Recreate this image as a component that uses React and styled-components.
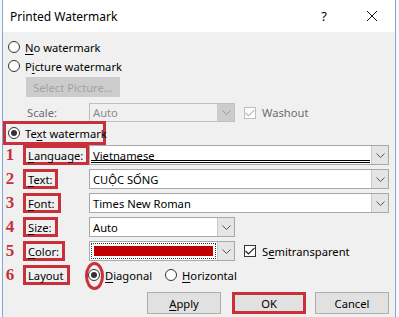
import React from 'react'
import styled, { createGlobalStyle } from 'styled-components'

const Global = createGlobalStyle`
  html, body { margin: 0; padding: 0; background: #fff; }
  body {
    font-family: "Segoe UI", "Noto Sans", "Open Sans", sans-serif;
    font-size: 11.2px;
    color: #000;
    white-space: nowrap;
  }
`

const RED = '#c8303a'

const Window = styled.div`
  width: 399px;
  height: 317px;
  display: flex;
  background: #f4f7fb;
  overflow: hidden;
`
const Dialog = styled.div`
  margin-left: 2px;
  width: 392px;
  height: 317px;
  border-left: 1px solid #86a6d3;
  border-right: 1px solid #86a6d3;
  background: #f0f0f0;
  display: flex;
  flex-direction: column;
`
const TitleBar = styled.div`
  height: 32px;
  background: #fff;
  display: flex;
  align-items: center;
  padding-left: 7px;
  font-size: 12px;
`
const Title = styled.span`
  flex: 1;
`
const Help = styled.span`
  width: 12px;
  margin-right: 36px;
  text-align: center;
  font-size: 13px;
`
const Close = styled.div`
  width: 12px;
  height: 12px;
  margin-right: 17px;
  display: flex;
`
const Body = styled.div`
  display: flex;
  flex-direction: column;
`
const Row = styled.div`
  display: flex;
  align-items: center;
  height: ${p => p.$h || 19}px;
  margin-top: ${p => p.$mt || 0}px;
  padding-left: ${p => p.$pl || 0}px;
`
const Radio = styled.span`
  width: 12px;
  height: 12px;
  border: 1px solid #333;
  border-radius: 50%;
  background: #fff;
  box-sizing: border-box;
  display: inline-flex;
  align-items: center;
  justify-content: center;
  margin-right: 5px;
  flex: none;
  position: relative;
  &::before {
    content: '';
    display: ${p => (p.$on ? 'block' : 'none')};
    width: 6px;
    height: 6px;
    border-radius: 50%;
    background: #333;
  }
  &::after {
    content: '';
    display: ${p => (p.$ring ? 'block' : 'none')};
    position: absolute;
    left: -4px;
    top: -8px;
    width: 19px;
    height: 28px;
    box-sizing: border-box;
    border: 3px solid ${RED};
    border-radius: 50%;
  }
`
const U = styled.span`
  text-decoration: underline;
  text-underline-offset: 2px;
`
const Disabled = styled.span`
  color: ${p => p.$c || '#6d6d6d'};
`
const FlatButton = styled.div`
  width: 94px;
  height: 20px;
  margin-left: 23px;
  margin-top: 2px;
  background: #cccccc;
  color: #a2a2a2;
  display: flex;
  align-items: center;
  justify-content: center;
`
const PlainLabel = styled.span`
  width: 62px;
  padding-left: 24px;
  color: ${p => p.$c || '#000'};
`
const Combo = styled.div`
  width: ${p => p.$w}px;
  height: ${p => p.$h || 20}px;
  box-sizing: border-box;
  border: 1px solid ${p => (p.$off ? '#bfbfbf' : '#a8a8a8')};
  background: ${p => (p.$off ? '#f0f0f0' : '#fff')};
  display: flex;
  flex: none;
`
const Value = styled.div`
  flex: 1;
  display: flex;
  align-items: center;
  padding-left: 3px;
  color: ${p => (p.$off ? '#8a8a8a' : '#000')};
  position: relative;
  ${p =>
    p.$double &&
    `&::after {
      content: '';
      position: absolute;
      left: 1px; right: 1px; bottom: 1px;
      height: 1px;
      border-top: 1px solid #000;
      border-bottom: 1px solid #000;
    }`}
`
const Swatch = styled.div`
  flex: 1;
  margin: 1px;
  border: 1px dotted #333;
  padding: 2px;
  display: flex;
  &::before {
    content: '';
    flex: 1;
    background: #c00000;
  }
`
const Arrow = styled.div`
  width: 16px;
  background: ${p => (p.$off ? '#cccccc' : '#e5e5e5')};
  border-left: 1px solid ${p => (p.$off ? '#cccccc' : '#c8c8c8')};
  display: flex;
  align-items: center;
  justify-content: center;
`
const Check = styled.span`
  width: 12px;
  height: 12px;
  box-sizing: border-box;
  border: 1px solid ${p => (p.$off ? '#bcbcbc' : '#333')};
  background: #fff;
  margin-left: 9px;
  margin-right: 6px;
  display: inline-flex;
  align-items: center;
  justify-content: center;
`
const RedBox = styled.div`
  width: 103px;
  height: 24px;
  box-sizing: border-box;
  border: 3px solid ${RED};
  display: flex;
  align-items: center;
  padding-left: 2px;
  margin-top: -1px;
`
const Num = styled.span`
  width: 14px;
  text-align: center;
  font-family: "Liberation Serif", "Times New Roman", serif;
  font-weight: bold;
  font-size: 17px;
  color: ${RED};
`
const LabelCell = styled.div`
  width: 72px;
  padding-left: 6px;
  box-sizing: border-box;
  display: flex;
`
const LabelBox = styled.span`
  height: 20px;
  box-sizing: border-box;
  border: 3px solid ${RED};
  padding: 0 3px 0 2px;
  display: inline-flex;
  align-items: center;
`
const Options = styled.div`
  display: flex;
  align-items: center;
  margin-left: -1px;
`
const Option = styled.span`
  display: inline-flex;
  align-items: center;
  margin-right: ${p => p.$mr || 0}px;
`
const ButtonRow = styled.div`
  display: flex;
  margin-top: 7px;
  padding-left: 144px;
`
const Button = styled.div`
  width: 74px;
  height: 22px;
  box-sizing: border-box;
  background: #e1e1e1;
  border: ${p => (p.$red ? `3px solid ${RED}` : '1px solid #adadad')};
  margin-right: ${p => p.$mr || 0}px;
  display: flex;
  align-items: center;
  justify-content: center;
`

const Chevron = ({ off }) => (
  <svg width="9" height="5" viewBox="0 0 9 5">
    <path d="M0.5 0.5 L4.5 4.5 L8.5 0.5" fill="none" stroke={off ? '#9a9a9a' : '#555'} strokeWidth="1" />
  </svg>
)

const Tick = ({ off }) => (
  <svg width="10" height="8" viewBox="0 0 10 8">
    <path d="M0.5 4 L3.5 7 L9.5 0.8" fill="none" stroke={off ? '#bcbcbc' : '#222'} strokeWidth="1.2" />
  </svg>
)

const Field = ({ n, label, children }) => (
  <Row $mt={n === 1 ? 0 : 4} $h={20}>
    <Num>{n}</Num>
    <LabelCell>
      <LabelBox>{label}</LabelBox>
    </LabelCell>
    {children}
  </Row>
)

export default function App() {
  return (
    <>
      <Global />
      <Window>
        <Dialog>
          <TitleBar>
            <Title>Printed Watermark</Title>
            <Help>?</Help>
            <Close>
              <svg width="12" height="12" viewBox="0 0 12 12">
                <path d="M1 1 L11 11 M11 1 L1 11" stroke="#111" strokeWidth="1" />
              </svg>
            </Close>
          </TitleBar>
          <Body>
            <Row $mt={6} $h={18} $pl={5}>
              <Radio />
              <span><U>N</U>o watermark</span>
            </Row>
            <Row $mt={1} $h={18} $pl={5}>
              <Radio />
              <span>P<U>i</U>cture watermark</span>
            </Row>
            <FlatButton>Select Picture...</FlatButton>
            <Row $mt={6} $h={19}>
              <PlainLabel $c="#6d6d6d">Scale:</PlainLabel>
              <Combo $w={146} $h={19} $off>
                <Value $off>Auto</Value>
                <Arrow $off><Chevron off /></Arrow>
              </Combo>
              <Check $off><Tick off /></Check>
              <Disabled>Washout</Disabled>
            </Row>
            <RedBox>
              <Radio $on />
              <span>Te<U>x</U>t watermark</span>
            </RedBox>
            <Field n={1} label={<span><U>L</U>anguage:</span>}>
              <Combo $w={300}>
                <Value $double>Vietnamese</Value>
                <Arrow><Chevron /></Arrow>
              </Combo>
            </Field>
            <Field n={2} label={<span><U>T</U>ext:</span>}>
              <Combo $w={300}>
                <Value>CUỘC SỐNG</Value>
                <Arrow><Chevron /></Arrow>
              </Combo>
            </Field>
            <Field n={3} label={<span><U>F</U>ont:</span>}>
              <Combo $w={300}>
                <Value>Times New Roman</Value>
                <Arrow><Chevron /></Arrow>
              </Combo>
            </Field>
            <Field n={4} label={<span><U>S</U>ize:</span>}>
              <Combo $w={146}>
                <Value>Auto</Value>
                <Arrow><Chevron /></Arrow>
              </Combo>
            </Field>
            <Field n={5} label={<span><U>C</U>olor:</span>}>
              <Combo $w={146}>
                <Swatch />
                <Arrow><Chevron /></Arrow>
              </Combo>
              <Check><Tick /></Check>
              <span>S<U>e</U>mitransparent</span>
            </Field>
            <Field n={6} label={<span>Layout</span>}>
              <Options>
                <Option $mr={13}>
                  <Radio $on $ring />
                  <span><U>D</U>iagonal</span>
                </Option>
                <Option>
                  <Radio />
                  <span><U>H</U>orizontal</span>
                </Option>
              </Options>
            </Field>
            <ButtonRow>
              <Button $mr={11}><span><U>A</U>pply</span></Button>
              <Button $red $mr={9}>OK</Button>
              <Button>Cancel</Button>
            </ButtonRow>
          </Body>
        </Dialog>
      </Window>
    </>
  )
}
